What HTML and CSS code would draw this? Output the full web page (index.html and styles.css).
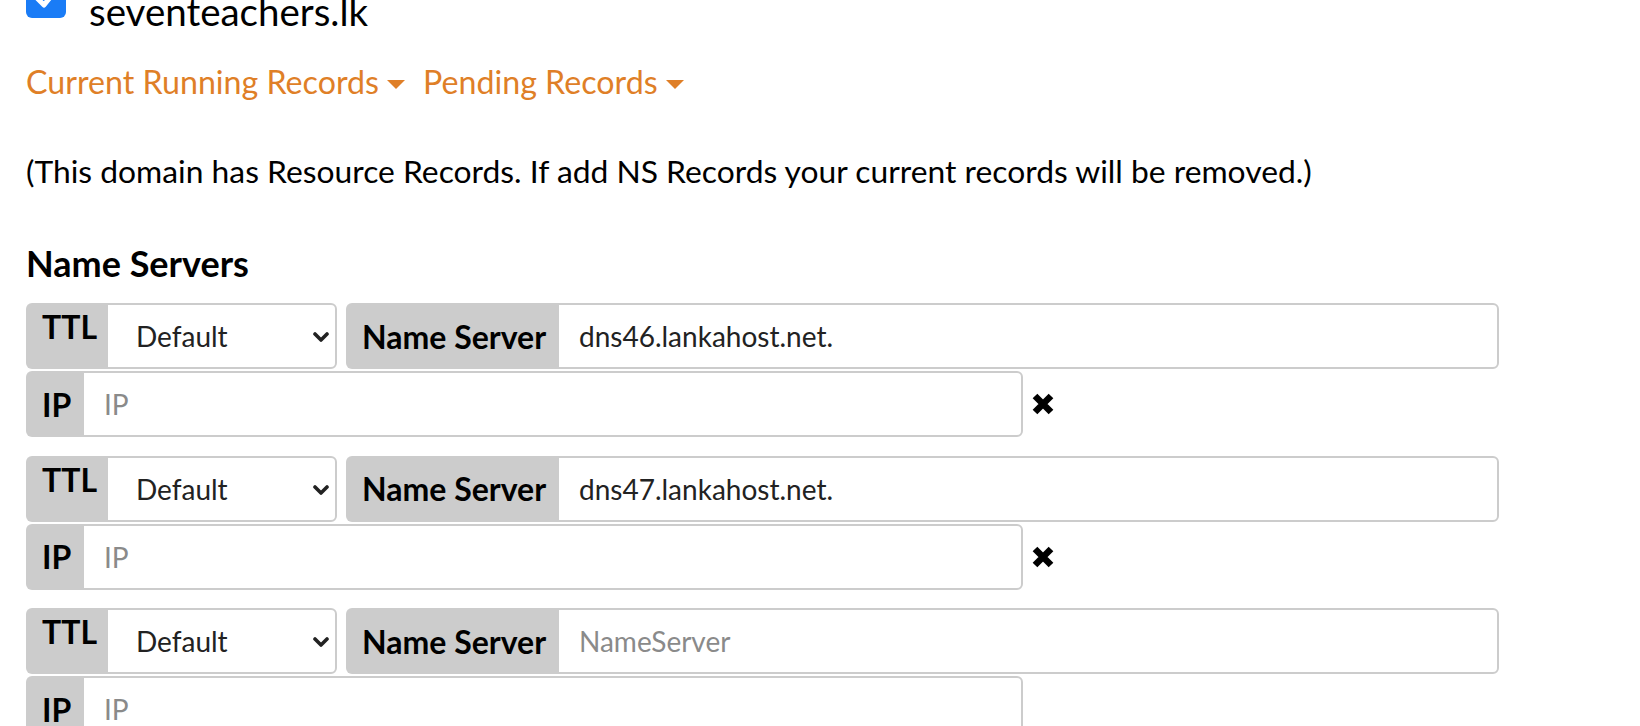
FILE: index.html
```html
<!DOCTYPE html>
<html lang="en">
<head>
<meta charset="utf-8">
<title>Name Servers</title>
<link rel="stylesheet" href="styles.css">
</head>
<body>
<div class="page">
  <div class="domain">
    <span class="check">
      <svg viewBox="0 0 40 40" width="40" height="40"><rect x="0" y="0" width="40" height="40" rx="6" fill="#1a7cf6"/><path d="M11 20 L18 27 L30 12" fill="none" stroke="#fff" stroke-width="5" stroke-linecap="round" stroke-linejoin="round"/></svg>
    </span>
    <span class="domain-name">seventeachers.lk</span>
  </div>

  <div class="links">
    <a class="drop" href="#">Current Running Records<span class="caret"></span></a>
    <a class="drop" href="#">Pending Records<span class="caret"></span></a>
  </div>

  <p class="note">(This domain has Resource Records. If add NS Records your current records will be removed.)</p>

  <h2 class="heading">Name Servers</h2>

  <div class="groups">
    <div class="group">
      <div class="row">
        <span class="addon addon-top">TTL</span>
        <div class="select-wrap">
          <select class="select"><option>Default</option></select>
          <svg class="chev" viewBox="0 0 16 10" width="16" height="10"><path d="M2 2 L8 8 L14 2" fill="none" stroke="#222" stroke-width="3.6" stroke-linecap="round" stroke-linejoin="round"/></svg>
        </div>
        <span class="addon addon-ns">Name Server</span>
        <input class="field field-ns" type="text" value="dns46.lankahost.net." placeholder="NameServer">
      </div>
      <div class="row">
        <span class="addon addon-ip">IP</span>
        <input class="field field-ip" type="text" placeholder="IP">
        <span class="remove"><svg viewBox="0 0 24 24" width="24" height="24"><path d="M4 4 L20 20 M20 4 L4 20" stroke="#000" stroke-width="6.6" stroke-linecap="butt"/></svg></span>
      </div>
    </div>

    <div class="group">
      <div class="row">
        <span class="addon addon-top">TTL</span>
        <div class="select-wrap">
          <select class="select"><option>Default</option></select>
          <svg class="chev" viewBox="0 0 16 10" width="16" height="10"><path d="M2 2 L8 8 L14 2" fill="none" stroke="#222" stroke-width="3.6" stroke-linecap="round" stroke-linejoin="round"/></svg>
        </div>
        <span class="addon addon-ns">Name Server</span>
        <input class="field field-ns" type="text" value="dns47.lankahost.net." placeholder="NameServer">
      </div>
      <div class="row">
        <span class="addon addon-ip">IP</span>
        <input class="field field-ip" type="text" placeholder="IP">
        <span class="remove"><svg viewBox="0 0 24 24" width="24" height="24"><path d="M4 4 L20 20 M20 4 L4 20" stroke="#000" stroke-width="6.6" stroke-linecap="butt"/></svg></span>
      </div>
    </div>

    <div class="group">
      <div class="row">
        <span class="addon addon-top">TTL</span>
        <div class="select-wrap">
          <select class="select"><option>Default</option></select>
          <svg class="chev" viewBox="0 0 16 10" width="16" height="10"><path d="M2 2 L8 8 L14 2" fill="none" stroke="#222" stroke-width="3.6" stroke-linecap="round" stroke-linejoin="round"/></svg>
        </div>
        <span class="addon addon-ns">Name Server</span>
        <input class="field field-ns" type="text" placeholder="NameServer">
      </div>
      <div class="row">
        <span class="addon addon-ip">IP</span>
        <input class="field field-ip" type="text" placeholder="IP">
      </div>
    </div>
  </div>
</div>
</body>
</html>
```

FILE: styles.css
```css
* { box-sizing: border-box; }

html, body {
  margin: 0;
  padding: 0;
  background: #fff;
  overflow: hidden;
}

body {
  font-family: Lato, "Open Sans", "Liberation Sans", sans-serif;
  color: #000;
}

.page {
  display: flex;
  flex-direction: column;
  align-items: flex-start;
  padding-left: 26px;
  height: 726px;
}

.domain {
  display: flex;
  align-items: flex-start;
  gap: 23px;
  margin-top: -11px;
  height: 44px;
}

.check {
  display: block;
  width: 40px;
  height: 40px;
  margin-top: -11px;
}

.check svg { display: block; }

.domain-name {
  font-size: 38.5px;
  line-height: 44px;
  color: #000;
}

.links {
  display: flex;
  gap: 18px;
  margin-top: 31px;
  font-size: 32.2px;
  line-height: 36px;
}

.drop {
  color: #df7f27;
  text-decoration: none;
  display: inline-flex;
  align-items: center;
}

.caret {
  display: inline-block;
  width: 0;
  height: 0;
  margin-left: 8px;
  margin-top: 4px;
  border-left: 9px solid transparent;
  border-right: 9px solid transparent;
  border-top: 9.5px solid #df7f27;
}

.note {
  margin: 53px 0 0;
  font-size: 31.8px;
  line-height: 36px;
  color: #000;
}

.heading {
  margin: 55px 0 0;
  font-size: 36px;
  line-height: 38px;
  font-weight: 700;
  color: #000;
}

.groups {
  display: flex;
  flex-direction: column;
  gap: 18.5px;
  margin-top: 21px;
}

.group {
  display: flex;
  flex-direction: column;
  gap: 2px;
}

.row {
  display: flex;
  align-items: stretch;
  height: 66px;
}

.addon {
  display: flex;
  align-items: center;
  background: #cccccc;
  border-radius: 6px 0 0 6px;
  padding: 0 0 0 16px;
  font-size: 32px;
  font-weight: 700;
  color: #000;
  white-space: nowrap;
  flex: none;
}

.addon-top {
  align-items: flex-start;
  padding-top: 6px;
  line-height: 36px;
  width: 80px;
}

.addon-ns {
  margin-left: 9px;
  width: 211px;
}

.addon-ip {
  width: 56px;
}

.select-wrap {
  position: relative;
  width: 231px;
  flex: none;
}

.select {
  -webkit-appearance: none;
  appearance: none;
  width: 100%;
  height: 100%;
  margin: 0;
  border: 2px solid #cccccc;
  border-radius: 0 6px 6px 0;
  background: #fff;
  padding: 0 0 0 28px;
  font-family: Lato, "Open Sans", "Liberation Sans", sans-serif;
  font-size: 28px;
  color: #222;
  outline: none;
}

.chev {
  position: absolute;
  right: 8px;
  top: 29px;
}

.field {
  height: 100%;
  margin: 0;
  border: 2px solid #cccccc;
  border-radius: 0 6px 6px 0;
  background: #fff;
  padding: 0 0 0 20px;
  font-family: Lato, "Open Sans", "Liberation Sans", sans-serif;
  font-size: 28px;
  color: #222;
  outline: none;
  flex: none;
}

.field::placeholder { color: #8a8a8a; }

.field-ns { width: 942px; }

.field-ip { width: 941px; }

.remove {
  display: flex;
  align-items: center;
  margin-left: 8px;
}

.remove svg { display: block; }
```
